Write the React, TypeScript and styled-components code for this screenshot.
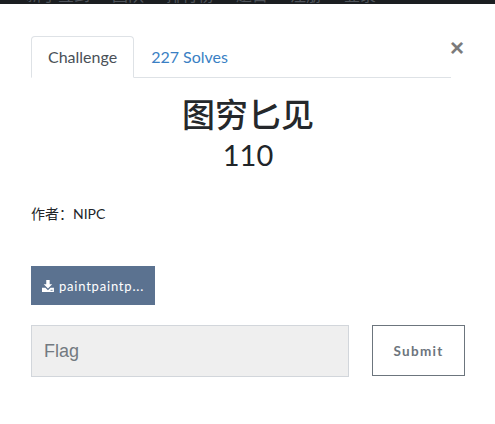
import React from "react";
import styled, { createGlobalStyle } from "styled-components";

const Global = createGlobalStyle`
  html, body { margin: 0; padding: 0; background: #fff; }
  body { font-family: Lato, "Noto Sans CJK SC", sans-serif; color: #212529; }
`;

const TopBar = styled.div`
  height: 4px;
  background: #1b1e21;
  overflow: hidden;
  display: flex;
  gap: 22px;
  padding-left: 26px;
`;

const NavItem = styled.span`
  font-size: 16px;
  line-height: 16px;
  margin-top: -14px;
  color: #4f545b;
  font-family: "Noto Sans CJK SC", sans-serif;
`;

const Dialog = styled.div`
  padding: 28px 30px 0 31px;
  position: relative;
`;

const Close = styled.button`
  position: absolute;
  right: 31px;
  top: 32px;
  border: none;
  background: none;
  padding: 0;
  font-size: 24px;
  line-height: 24px;
  font-weight: 700;
  color: #7b7b7b;
  font-family: "Liberation Sans", sans-serif;
`;

const Tabs = styled.div`
  display: flex;
  margin-top: 4px;
  margin-right: 14px;
  border-bottom: 1px solid #dee2e6;
`;

const Tab = styled.div<{ $active?: boolean }>`
  padding: 8px 16px;
  margin-bottom: -1px;
  font-size: 16px;
  line-height: 24px;
  border: 1px solid ${(p) => (p.$active ? "#dee2e6" : "transparent")};
  border-bottom-color: ${(p) => (p.$active ? "#fff" : "transparent")};
  border-radius: 4px 4px 0 0;
  background: ${(p) => (p.$active ? "#fff" : "transparent")};
  color: ${(p) => (p.$active ? "#495057" : "#3a7fc4")};
`;

const Title = styled.h2`
  margin: 15px 0 0;
  text-align: center;
  font-size: 33px;
  line-height: 40px;
  font-weight: 500;
  font-family: "Noto Sans CJK SC", sans-serif;
  color: #25282b;
`;

const Value = styled.h3`
  margin: 4px 0 0;
  text-align: center;
  font-size: 29px;
  line-height: 36px;
  font-weight: 400;
  color: #212529;
`;

const Author = styled.p`
  margin: 31px 0 0;
  font-size: 14px;
  line-height: 20px;
  color: #212529;
`;

const Download = styled.button`
  margin-top: 42px;
  display: inline-flex;
  align-items: center;
  gap: 5px;
  height: 39px;
  width: 124px;
  padding: 0 11px;
  border: none;
  background: #5b7290;
  color: #fff;
  font-family: Lato, sans-serif;
  font-weight: 400;
  font-size: 13px;
  letter-spacing: 0.8px;
`;

const FormRow = styled.div`
  display: flex;
  gap: 23px;
  margin-top: 20px;
`;

const FlagInput = styled.input`
  width: 318px;
  height: 52px;
  box-sizing: border-box;
  border: 1px solid #d2d6db;
  background: #efefef;
  padding: 0 12px;
  font-family: "Liberation Sans", sans-serif;
  font-size: 18px;
  &::placeholder { color: #737a81; }
`;

const Submit = styled.button`
  width: 93px;
  height: 51px;
  box-sizing: border-box;
  border: 1px solid #6c757d;
  background: #fff;
  color: #6c757d;
  font-family: Lato, sans-serif;
  font-weight: 700;
  font-size: 13.5px;
  letter-spacing: 1.3px;
`;

const DownloadIcon = () => (
  <svg width="14" height="14" viewBox="0 0 14 14" fill="#fff">
    <path d="M5 0h4v5h3l-5 5-5-5h3z" />
    <path d="M0 9h4l3 3 3-3h4v5H0z" />
    <rect x="10" y="11.5" width="2.5" height="1" fill="#5b7290" />
  </svg>
);

export default function App() {
  return (
    <>
      <Global />
      <TopBar>
        <NavItem>新手签到</NavItem>
        <NavItem>团队</NavItem>
        <NavItem>排行榜</NavItem>
        <NavItem>题目</NavItem>
        <NavItem>注册</NavItem>
        <NavItem>登录</NavItem>
      </TopBar>
      <Dialog>
        <Close aria-label="close">×</Close>
        <Tabs>
          <Tab $active>Challenge</Tab>
          <Tab>227 Solves</Tab>
        </Tabs>
        <Title>图穷匕见</Title>
        <Value>110</Value>
        <Author>作者：NIPC</Author>
        <Download>
          <DownloadIcon />
          paintpaintp...
        </Download>
        <FormRow>
          <FlagInput placeholder="Flag" />
          <Submit>Submit</Submit>
        </FormRow>
      </Dialog>
    </>
  );
}
